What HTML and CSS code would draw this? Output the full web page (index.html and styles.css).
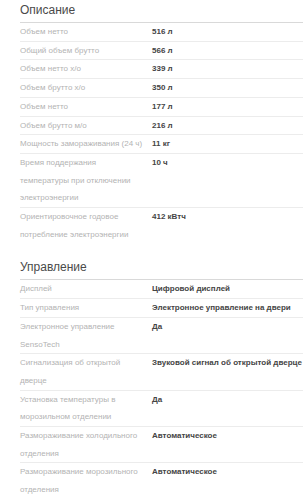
FILE: index.html
```html
<!DOCTYPE html>
<html lang="ru">
<head>
<meta charset="utf-8">
<title>Характеристики</title>
<link rel="stylesheet" href="styles.css">
</head>
<body>
<section class="spec">
  <h2 class="spec-title">Описание</h2>
  <div class="spec-row"><div class="spec-label">Объем нетто</div><div class="spec-value">516 л</div></div>
  <div class="spec-row"><div class="spec-label">Общий объем брутто</div><div class="spec-value">566 л</div></div>
  <div class="spec-row"><div class="spec-label">Объем нетто х/о</div><div class="spec-value">339 л</div></div>
  <div class="spec-row"><div class="spec-label">Объем брутто х/о</div><div class="spec-value">350 л</div></div>
  <div class="spec-row"><div class="spec-label">Объем нетто</div><div class="spec-value">177 л</div></div>
  <div class="spec-row"><div class="spec-label">Объем брутто м/о</div><div class="spec-value">216 л</div></div>
  <div class="spec-row"><div class="spec-label">Мощность замораживания (24 ч)</div><div class="spec-value">11 кг</div></div>
  <div class="spec-row"><div class="spec-label">Время поддержания температуры при отключении электроэнергии</div><div class="spec-value">10 ч</div></div>
  <div class="spec-row"><div class="spec-label">Ориентировочное годовое потребление электроэнергии</div><div class="spec-value">412 кВтч</div></div>
</section>
<section class="spec spec-next">
  <h2 class="spec-title">Управление</h2>
  <div class="spec-row"><div class="spec-label">Дисплей</div><div class="spec-value">Цифровой дисплей</div></div>
  <div class="spec-row"><div class="spec-label">Тип управления</div><div class="spec-value">Электронное управление на двери</div></div>
  <div class="spec-row"><div class="spec-label">Электронное управление SensoTech</div><div class="spec-value">Да</div></div>
  <div class="spec-row"><div class="spec-label">Сигнализация об открытой дверце</div><div class="spec-value">Звуковой сигнал об открытой дверце</div></div>
  <div class="spec-row"><div class="spec-label">Установка температуры в морозильном отделении</div><div class="spec-value">Да</div></div>
  <div class="spec-row"><div class="spec-label">Размораживание холодильного отделения</div><div class="spec-value">Автоматическое</div></div>
  <div class="spec-row"><div class="spec-label">Размораживание морозильного отделения</div><div class="spec-value">Автоматическое</div></div>
</section>
</body>
</html>
```

FILE: styles.css
```css
html, body {
  margin: 0;
  padding: 0;
  background: #ffffff;
  overflow: hidden;
}

body {
  font-family: "Liberation Sans", Arial, sans-serif;
  padding-left: 20px;
}

.spec {
  display: flex;
  flex-direction: column;
}

.spec-next {
  margin-top: 14px;
}

.spec-title {
  margin: 0;
  font-size: 12px;
  font-weight: normal;
  line-height: 20px;
  color: #4a4a4a;
  padding-bottom: 2px;
  border-bottom: 1px solid #d9d9d9;
}

.spec-row {
  display: grid;
  grid-template-columns: 132px 1fr;
  border-bottom: 1px solid #ececec;
  font-size: 8px;
  line-height: 17.7px;
}

.spec-row:last-child {
  border-bottom: none;
}

.spec-label {
  color: #b3b3b3;
  padding-right: 8px;
}

.spec-value {
  color: #444444;
  font-weight: bold;
  white-space: nowrap;
}
```
